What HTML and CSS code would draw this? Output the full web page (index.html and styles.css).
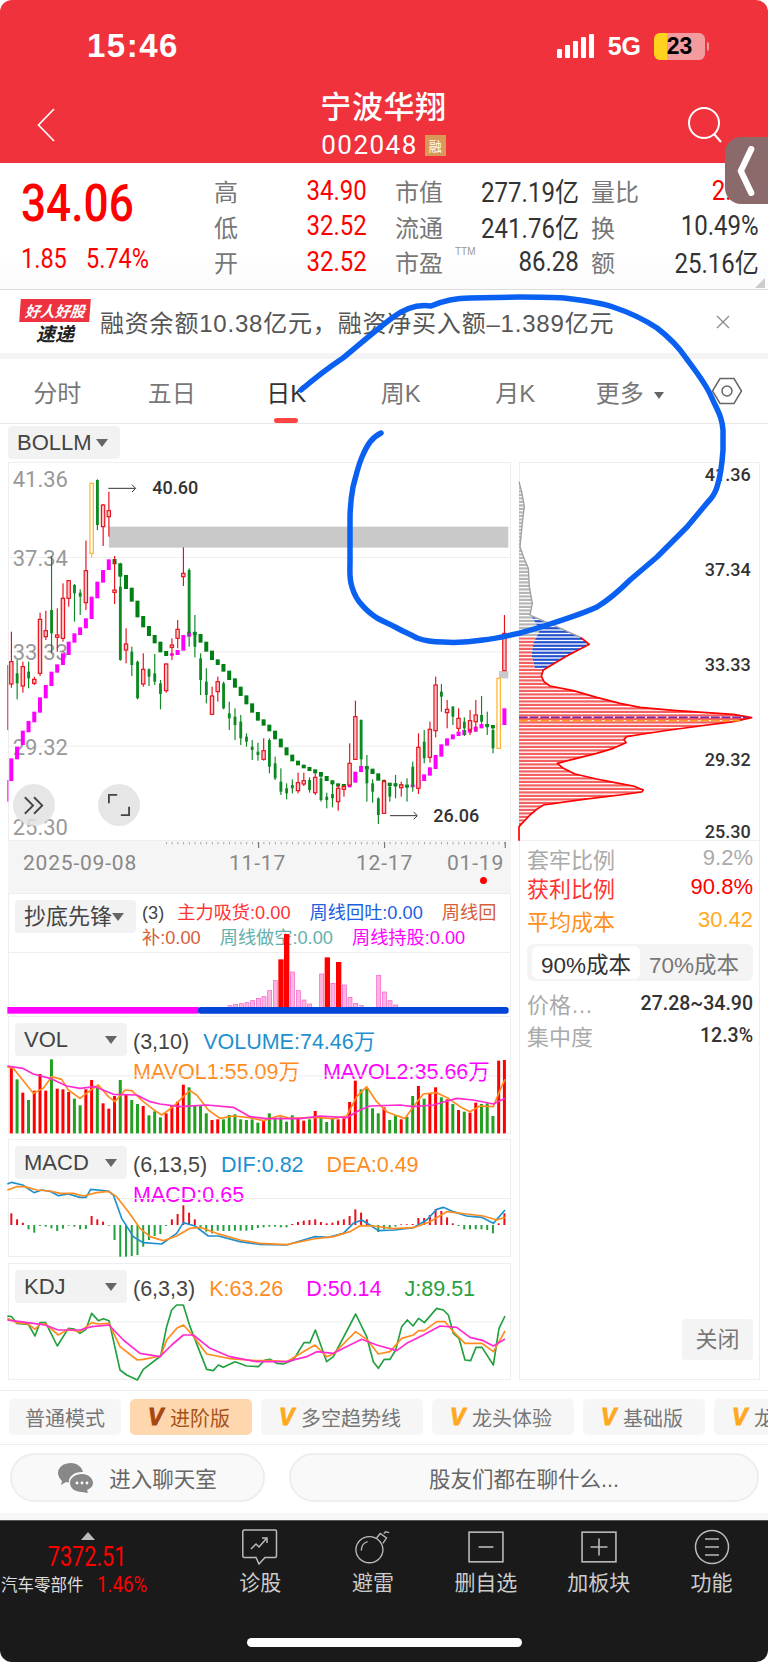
FILE: index.html
```html
<!DOCTYPE html>
<html lang="zh-CN">
<head>
    <meta charset="UTF-8">
    <meta name="viewport" content="width=device-width, initial-scale=1.0">
    <title>宁波华翔 002048</title>
    <link rel="stylesheet" href="styles.css">
</head>
<body>
<div class="screen">
    <header class="top">
        <div class="status-bar">
            <span class="time">15:46</span>
            <div class="status-right">
                <span class="signal"><i></i><i></i><i></i><i></i><i></i></span>
                <span class="net">5G</span>
                <span class="battery"><b>23</b></span>
                <span class="battery-nub"></span>
            </div>
        </div>
        <div class="title-bar">
            <svg class="back" viewBox="0 0 18 34"><path d="M17 1 1.5 17 17 33"/></svg>
            <div class="title-mid">
                <div class="stock-name">宁波华翔</div>
                <div class="stock-code">002048<span class="rong">融</span></div>
            </div>
            <svg class="search" viewBox="0 0 36 36"><circle cx="17" cy="16" r="15"/><path d="M27 27l7 8"/></svg>
        </div>
    </header>
    <div class="side-tab"><svg viewBox="0 0 20 48"><path d="M15 3 5 24l10 21"/></svg></div>

    <section class="quote">
        <div class="price-box">
            <div class="price">34.06</div>
            <div class="change"><span>1.85</span><span>5.74%</span></div>
        </div>
        <div class="quote-grid">
            <div class="q q1"><span class="q-l">高</span><span class="q-v up">34.90</span></div>
            <div class="q q2"><span class="q-l">市值</span><span class="q-v">277.19亿</span></div>
            <div class="q q3"><span class="q-l">量比</span><span class="q-v up">2.08</span></div>
            <div class="q q1"><span class="q-l">低</span><span class="q-v up">32.52</span></div>
            <div class="q q2"><span class="q-l">流通</span><span class="q-v">241.76亿</span></div>
            <div class="q q3"><span class="q-l">换</span><span class="q-v">10.49%</span></div>
            <div class="q q1"><span class="q-l">开</span><span class="q-v up">32.52</span></div>
            <div class="q q2"><span class="q-l">市盈<sup class="ttm">TTM</sup></span><span class="q-v">86.28</span></div>
            <div class="q q3"><span class="q-l">额</span><span class="q-v">25.16亿</span></div>
        </div>
        <span class="corner"></span>
    </section>

    <section class="news">
        <div class="news-logo">
            <div class="news-flag">好人好股</div>
            <div class="news-sub">速递</div>
        </div>
        <div class="news-text">融资余额10.38亿元，融资净买入额–1.389亿元</div>
        <svg class="news-close" viewBox="0 0 14 14"><path d="M1 1l12 12M13 1 1 13"/></svg>
    </section>

    <nav class="tabs">
        <span class="tab">分时</span>
        <span class="tab">五日</span>
        <span class="tab active">日K</span>
        <span class="tab">周K</span>
        <span class="tab">月K</span>
        <span class="tab">更多<i class="tab-caret"></i></span>
        <svg class="tab-set" viewBox="0 0 32 28"><path d="M9 1.5h14L30.5 14 23 26.5H9L1.500 14z"/><circle cx="16" cy="14" r="5"/></svg>
    </nav>

    <div class="charts">
        <div class="left-col">
            <div class="pick pick-boll">BOLLM<i class="caret"></i></div>
            <div class="main-frame">
                <svg id="kline" class="chart-svg" viewBox="24 126 1509 1137"></svg>
                <span class="round-btn btn-more">
                    <svg viewBox="0 0 24 20"><path d="M2 1l9 9-9 9M12 1l9 9-9 9"/></svg>
                </span>
                <span class="round-btn btn-full">
                    <svg viewBox="0 0 24 24"><path d="M1 10V1h9M23 14v9h-9"/></svg>
                </span>
            </div>
            <div class="dates">
                <span>2025-09-08</span><span>11-17</span><span>12-17</span><span>01-19</span>
                <i class="dot"></i>
            </div>

            <div class="panel panel-cd">
                <div class="panel-head">
                    <div class="pick pick-cd">抄底先锋<i class="caret"></i></div>
                    <div class="legend legend-cd">
                        <span class="param">(3)</span>
                        <span class="c-red">主力吸货:0.00</span>
                        <span class="c-blue">周线回吐:0.00</span>
                        <span class="c-brick">周线回补:0.00</span>
                        <span class="c-teal">周线做空:0.00</span>
                        <span class="c-pink">周线持股:0.00</span>
                    </div>
                </div>
                <svg id="cd" class="panel-svg" viewBox="24 129 1509 363"></svg>
            </div>

            <div class="panel panel-vol">
                <div class="panel-head">
                    <div class="pick pick-sub">VOL<i class="caret"></i></div>
                    <div class="legend">
                        <span class="param">(3,10)</span>
                        <span class="c-sky">VOLUME:74.46万</span>
                        <span class="c-orange">MAVOL1:55.09万</span>
                        <span class="c-pink">MAVOL2:35.66万</span>
                    </div>
                </div>
                <svg id="vol" class="panel-svg" viewBox="24 498 1509 354"></svg>
            </div>

            <div class="panel panel-macd">
                <div class="panel-head">
                    <div class="pick pick-sub">MACD<i class="caret"></i></div>
                    <div class="legend">
                        <span class="param">(6,13,5)</span>
                        <span class="c-sky">DIF:0.82</span>
                        <span class="c-orange">DEA:0.49</span>
                        <span class="c-pink">MACD:0.65</span>
                    </div>
                </div>
                <svg id="macd" class="panel-svg" viewBox="24 27 1509 354"></svg>
            </div>

            <div class="panel panel-kdj">
                <div class="panel-head">
                    <div class="pick pick-sub">KDJ<i class="caret"></i></div>
                    <div class="legend">
                        <span class="param">(6,3,3)</span>
                        <span class="c-orange">K:63.26</span>
                        <span class="c-pink">D:50.14</span>
                        <span class="c-green">J:89.51</span>
                    </div>
                </div>
                <svg id="kdj" class="panel-svg" viewBox="24 399 1509 351"></svg>
            </div>
        </div>

        <aside class="right-col">
            <svg id="chips" class="chips-svg" viewBox="57 126 723 1137"></svg>
            <div class="stats">
                <div class="stat stat-grey"><span>套牢比例</span><span>9.2%</span></div>
                <div class="stat stat-red"><span>获利比例</span><span>90.8%</span></div>
                <div class="stat stat-orange"><span>平均成本</span><span>30.42</span></div>
                <div class="seg"><span class="seg-on">90%成本</span><span>70%成本</span></div>
                <div class="stat stat-info"><span>价格…</span><b>27.28~34.90</b></div>
                <div class="stat stat-info"><span>集中度</span><b>12.3%</b></div>
                <div class="close-btn">关闭</div>
            </div>
        </aside>
    </div>

    <div class="modes">
        <span class="mode">普通模式</span>
        <span class="mode mode-on"><i>V</i>进阶版</span>
        <span class="mode"><i>V</i>多空趋势线</span>
        <span class="mode"><i>V</i>龙头体验</span>
        <span class="mode"><i>V</i>基础版</span>
        <span class="mode"><i>V</i>龙头</span>
    </div>

    <div class="chat">
        <div class="pill pill-room">
            <svg class="chat-ico" viewBox="0 0 36 30">
                <path d="M13 0C6 0 0 4 0 10c0 3 2 6 4 8l-1 4 5-3c1 .3 2 .4 3 .5C10 14 16 9 24 9h1C24 4 19 0 13 0z"/>
                <path d="M24 11c-7 0-12 4-12 9s5 9 12 9l6 1 -1-3c4-2 6-4 6-7 0-5-5-9-11-9z"/>
                <circle cx="19" cy="20" r="1.400" fill="#fff"/><circle cx="24" cy="20" r="1.400" fill="#fff"/><circle cx="29" cy="20" r="1.400" fill="#fff"/>
            </svg>
            <span>进入聊天室</span>
        </div>
        <div class="pill pill-talk">股友们都在聊什么...</div>
    </div>
    <div class="chat-gap"></div>

    <footer class="bottom">
        <div class="bottom-row">
            <div class="market">
                <i class="market-up"></i>
                <div class="market-val">7372.51</div>
                <div class="market-line"><span>汽车零部件</span><em>1.46%</em></div>
            </div>
            <div class="act">
                <svg viewBox="0 0 36 36"><path d="M2 1h31a1.500 1.500 0 0 1 1.500 1.500V27a1.500 1.500 0 0 1-1.500 1.500H23L17 35l-3-6.500H2A1.500 1.500 0 0 1 .8 27V2.500A1.500 1.500 0 0 1 2 1z"/><path d="M9 20l5-5 3 3 7-8M20 9h5v5"/></svg>
                <span>诊股</span>
            </div>
            <div class="act">
                <svg viewBox="0 0 40 36"><ellipse cx="16" cy="21" rx="15" ry="14.500"/><path d="M7 22c0-5 3-9 7-10"/><path d="M24 8l4-5 7 5-4 6"/><path d="M32 3l2-2 4 1"/></svg>
                <span>避雷</span>
            </div>
            <div class="act">
                <svg viewBox="0 0 34 30"><rect x="1" y="1" width="32" height="28"/><path d="M10 15h14"/></svg>
                <span>删自选</span>
            </div>
            <div class="act">
                <svg viewBox="0 0 34 30"><rect x="1" y="1" width="32" height="28"/><path d="M9 15h16M17 7v16"/></svg>
                <span>加板块</span>
            </div>
            <div class="act">
                <svg viewBox="0 0 36 36"><circle cx="18" cy="18" r="16.500"/><path d="M11 10h14M11 18h14M11 26h14"/></svg>
                <span>功能</span>
            </div>
        </div>
        <div class="home-bar"></div>
    </footer>

    <svg class="scribble" viewBox="0 0 768 1662">
        <path d="M301 390C315 378 328 368 343 358 360 344 376 330 392 318 405 308 418 304 431 306 445 300 458 298 470 298L520 297C535 297 550 297 564 298 582 300 598 302 613 307 628 312 642 318 657 328 670 338 678 346 686 358 698 374 706 384 711 396 717 410 722 416 723 430L723 450C722 465 720 478 717 487 715 494 711 499 707 503L687 527 657 557 630 580C620 590 610 599 597 607 582 614 568 618 553 623 542 627 531 630 520 633 507 636 495 639 483 640 470 642 456 643 443 642 434 642 425 641 417 638 410 634 404 632 397 628 390 624 384 622 377 618 371 614 366 610 362 605 357 600 354 594 352 587 349 578 350 570 350 563L350 520C350 508 351 498 353 487 356 476 358 466 362 457 365 450 367 446 370 442 373 438 377 435 381 433"/>
    </svg>
</div>
<script src="charts.js"></script>
</body>
</html>
```

FILE: styles.css
```css
* { box-sizing: border-box; }
html, body { margin: 0; padding: 0; background: #fff; }
body { font-family: "Liberation Sans", "Noto Sans CJK SC", sans-serif; color: #333; }
.screen { position: relative; width: 768px; height: 1662px; overflow: hidden; background: #fff; }
i, em { font-style: normal; }

/* 数字字体 */
.price, .change, .q-v, .market-val, .market-line em, .stock-code, .news-text, .dates { font-family: "Roboto", "Noto Sans CJK SC", sans-serif; }

/* 顶部 */
.top { background: #EF323C; height: 163px; border-radius: 12px 12px 0 0; color: #fff; }
.status-bar { height: 86px; padding: 6px 59px 0 87px; display: flex; align-items: center; }
.time { font-weight: 700; font-size: 33px; letter-spacing: 1.500px; }
.status-right { margin-left: auto; display: flex; align-items: center; }
.signal { display: flex; align-items: flex-end; gap: 3px; height: 24px; margin-right: 14px; }
.signal i { width: 5px; background: #fff; border-radius: 1px; }
.signal i:nth-child(1) { height: 9px; }
.signal i:nth-child(2) { height: 13px; }
.signal i:nth-child(3) { height: 17px; }
.signal i:nth-child(4) { height: 21px; }
.signal i:nth-child(5) { height: 24px; }
.net { font-size: 25px; font-weight: 700; margin-right: 13px; }
.battery { width: 51px; height: 27px; border-radius: 6px; background: linear-gradient(90deg, #FFD21E 0 13px, #F29CA0 13px); color: #000; text-align: center; font-size: 23px; line-height: 27px; }
.battery-nub { width: 2px; height: 9px; margin-left: 2px; background: #F29CA0; border-radius: 0 2px 2px 0; }
.title-bar { height: 77px; padding: 0 45px 0 37px; display: flex; align-items: center; justify-content: space-between; }
.back { width: 18px; height: 34px; fill: none; stroke: #fff; stroke-width: 1.700; }
.search { width: 36px; height: 36px; fill: none; stroke: #fff; stroke-width: 2; }
.title-mid { text-align: center; margin-left: 25px; }
.stock-name { font-size: 31px; line-height: 42px; letter-spacing: .6px; font-weight: 500; }
.stock-code { font-size: 26px; line-height: 33px; display: flex; align-items: center; justify-content: center; letter-spacing: 1.500px; }
.rong { width: 21px; height: 21px; margin-left: 7px; background: #D89A56; font: 13px/21px "Noto Sans CJK SC", sans-serif; letter-spacing: 0; }
.side-tab { position: absolute; left: 725px; top: 137px; width: 43px; height: 67px; border-radius: 16px 0 0 16px; background: #8B6A6B; display: flex; align-items: center; padding-left: 10px; z-index: 5; }
.side-tab svg { width: 22px; height: 50px; fill: none; stroke: #fff; stroke-width: 6; stroke-linecap: round; stroke-linejoin: round; }

/* 报价 */
.quote { position: relative; height: 127px; display: flex; border-bottom: 1px solid #ddd; background: linear-gradient(180deg, #fff, #fff 70%, #fbfbfb); }
.price-box { width: 214px; padding: 10px 0 0 21px; }
.price { display: inline-block; color: #F00; font-size: 52px; line-height: 61px; font-weight: 500; transform: scaleX(.85); transform-origin: left center; }
.change { margin-top: 7px; color: #F00; font-size: 27px; line-height: 36px; display: flex; gap: 12px; }
.change span { display: inline-block; transform: scaleX(.87); transform-origin: left center; }
.quote-grid { padding-top: 10px; display: grid; grid-template-columns: 181px 196px 168px; grid-auto-rows: 35.500px; }
.q { display: flex; justify-content: space-between; align-items: center; }
.q1 { padding-right: 28px; }
.q2 { padding-right: 12px; }
.q-l { font-size: 24px; color: #777; position: relative; }
.q-v { display: inline-block; font-size: 27px; color: #333; white-space: nowrap; transform: scaleX(.89); transform-origin: right center; }
.q-v.up { color: #F00; }
.ttm { position: absolute; left: 60px; top: 2px; font: 10px "Liberation Sans", sans-serif; color: #999; }
.corner { position: absolute; right: 3px; bottom: 1px; border: 5px solid transparent; border-right-color: #ccc; border-bottom-color: #ccc; }

/* 资讯 */
.news { height: 69px; display: flex; align-items: center; padding: 0 38px 0 20px; border-bottom: 6px solid #F4F4F4; }
.news-logo { width: 70px; margin-right: 10px; text-align: center; }
.news-flag { background: #EE3340; color: #fff; font: italic 700 15px/23px "Noto Sans CJK SC", sans-serif; transform: skewX(-4deg); white-space: nowrap; }
.news-sub { font: italic 700 19px/22px "Noto Sans CJK SC", sans-serif; color: #222; }
.news-text { font-size: 24px; color: #555; flex: 1; white-space: nowrap; letter-spacing: .8px; font-family: "Liberation Sans", "Noto Sans CJK SC", sans-serif; }
.news-close { width: 14px; height: 14px; fill: none; stroke: #888; stroke-width: 1.200; }

/* 周期切换 */
.tabs { height: 65px; display: flex; align-items: center; border-bottom: 1px solid #e8e8e8; position: relative; }
.tab { width: 114.500px; text-align: center; font-size: 24px; color: #777; position: relative; }
.tab.active { color: #333; }
.tab.active::after { content: ""; position: absolute; left: 45px; width: 24px; top: 44px; height: 5px; background: #F44; border-radius: 3px; }
.tab-caret { display: inline-block; margin-left: 10px; vertical-align: 3px; border: 5.500px solid transparent; border-top: 7px solid #666; border-bottom: 0; }
.tab-set { width: 32px; height: 28px; margin-left: 24px; fill: none; stroke: #666; stroke-width: 1.500; }

/* 图表区 */
.charts { height: 967px; padding: 2px 8px 0; display: flex; gap: 8px; border-bottom: 1px solid #eee; }
.left-col { width: 503px; display: flex; flex-direction: column; }
.right-col { width: 241px; height: 918px; margin-top: 36px; border: 1px solid #eee; display: flex; flex-direction: column; }
.pick { background: #F2F2F2; border-radius: 4px; height: 33px; font-size: 22px; line-height: 33px; color: #444; position: relative; flex-shrink: 0; }
.pick-boll { width: 112px; padding-left: 9px; margin-bottom: 3px; }
.caret { position: absolute; top: 13px; border: 6.500px solid transparent; border-top: 8px solid #666; border-bottom: 0; }
.pick-boll .caret { left: 88px; }
.pick-cd { width: 121px; padding-left: 9px; }
.pick-cd .caret { left: 97px; }
.pick-sub { width: 112px; padding-left: 9px; }
.pick-sub .caret { left: 90px; }

.main-frame { position: relative; z-index: 1; height: 379px; border: 1px solid #eee; }
.chart-svg { position: absolute; left: -1px; top: -1px; width: 503px; height: 379px; overflow: visible; }
.axis-l { font: 66px "Roboto", sans-serif; fill: #999; }
.axis-ann { font: 500 54px "Roboto", sans-serif; fill: #333; }
.axis-r { font: 500 54px "Roboto", sans-serif; fill: #333; text-anchor: end; }
.round-btn { position: absolute; top: 321px; width: 42px; height: 42px; border-radius: 50%; background: rgba(226, 226, 226, .85); display: flex; align-items: center; justify-content: center; }
.btn-more { left: 4px; }
.btn-full { left: 89px; }
.btn-more svg { width: 22px; height: 19px; }
.btn-full svg { width: 22px; height: 22px; }
.round-btn svg { fill: none; stroke: #444; stroke-width: 2; }
.dates { position: relative; height: 52px; background: #F5F5F5; padding-left: 15px; padding-top: 9px; display: grid; grid-template-columns: 206px 127px 91px auto; font-size: 21px; line-height: 26px; color: #888; letter-spacing: .8px; }
.dot { position: absolute; left: 472px; top: 36px; width: 7px; height: 7px; border-radius: 50%; background: #F00; }

.panel { position: relative; border: 1px solid #eee; padding: 6px 0 0 6px; }
.panel-cd { height: 121px; border-bottom: 0; }
.panel-vol { height: 118px; margin-top: 2px; }
.panel-macd { height: 118px; margin-top: 5px; }
.panel-kdj { height: 117px; margin-top: 6px; }
.panel-head { display: flex; }
.panel-svg { position: absolute; left: -1px; top: -1px; width: 503px; overflow: visible; pointer-events: none; }
.panel-cd .panel-svg { height: 121px; }
.panel-vol .panel-svg, .panel-macd .panel-svg { height: 118px; }
.panel-kdj .panel-svg { height: 117px; }
.legend { flex: 1; padding: 4px 0 0 6px; margin-right: -24px; font-size: 21.500px; line-height: 30px; }
.legend span { margin-right: 17px; }
.legend .param { margin-right: 8px; }
.legend-cd { font-size: 18.200px; line-height: 25px; padding-left: 6px; padding-top: 1px; margin-right: 0; }
.legend-cd span { margin-right: 14px; }
.legend-cd .param { margin-right: 8px; }
.param { color: #444; }
.c-red { color: #F33; }
.c-blue { color: #2060E0; }
.c-brick { color: #D4603A; }
.c-teal { color: #64AFAC; }
.c-pink { color: #F0F; }
.c-sky { color: #1E90D0; }
.c-orange { color: #FF8C1E; }
.c-green { color: #2AA040; }

/* 筹码 */
.chips-svg { display: block; margin: -1px; width: 241px; height: 379px; flex-shrink: 0; overflow: visible; }
.stats { flex: 1; border-top: 1px solid #eee; padding: 3px 6px 19px 7px; display: flex; flex-direction: column; }
.stat { display: flex; justify-content: space-between; align-items: center; font-size: 22px; }
.stat-grey { height: 28px; color: #AAA; }
.stat-red { height: 30px; color: #F33; }
.stat-red span:last-child { color: #F00; }
.stat-orange { height: 35px; color: #FF9020; }
.stat-orange span:last-child { color: #FFAA20; }
.seg { margin-top: 7px; height: 37px; background: #F4F4F4; border-radius: 6px; padding: 1px 5px; display: flex; font-size: 22.500px; color: #777; align-items: stretch; }
.seg span { flex: 1; display: flex; align-items: center; justify-content: center; white-space: nowrap; }
.seg .seg-on { flex: 0 0 108px; margin: 1px 0; background: #fff; border-radius: 6px; color: #333; }
.stat-info { height: 32px; color: #AAA; }
.stat-info:nth-child(5) { margin-top: 6px; }
.stat-info b { font: 500 19.500px "Roboto", sans-serif; color: #333; }
.close-btn { margin: auto 0 0 auto; width: 71px; height: 41px; background: #F4F4F4; border-radius: 4px; text-align: center; font-size: 22px; line-height: 41px; color: #777; }

/* 模式 */
.modes { height: 54px; padding: 8px 0 0 9px; display: flex; gap: 9px; overflow: hidden; border-bottom: 1px solid #eee; }
.mode { flex-shrink: 0; height: 36px; padding: 0 16px; background: #F6F6F6; border-radius: 5px; display: flex; align-items: center; font-size: 20px; color: #777; white-space: nowrap; }
.mode:nth-child(n+2) { padding: 0 22px 0 18px; }
.mode i { width: 16px; font: italic 900 23px "Liberation Sans", sans-serif; color: #FFA820; margin-right: 6px; -webkit-text-stroke: 1px currentColor; }
.mode-on { background: #FFD7AE; color: #A5521A; }
.mode-on i { color: #A8480E; }

/* 聊天 */
.chat { height: 68px; padding: 8px 9px 0 10px; display: flex; gap: 24px; }
.pill { height: 49px; border-radius: 25px; background: #F9F9F9; border: 2px solid #EEE; display: flex; align-items: center; justify-content: center; font-size: 21.500px; color: #666; }
.pill-room { width: 255px; }
.pill-talk { flex: 1; }
.chat-ico { width: 36px; height: 30px; margin-right: 15px; fill: #888; }
.chat-gap { height: 8px; background: #F7F7F7; border-bottom: 1px solid #555; }

/* 底部 */
.bottom { height: 141px; background: #1A1A1A; border-radius: 0 0 12px 12px; position: relative; color: #CCC; }
.bottom-row { display: flex; }
.market { width: 204px; padding-top: 10px; text-align: center; position: relative; }
.market-up { position: absolute; left: 81px; top: 11px; border: 7.500px solid transparent; border-bottom: 8px solid #BBB; border-top: 0; }
.market-val { display: inline-block; margin: 11px 0 0 -30px; font-size: 27px; line-height: 30px; color: #F00; transform: scaleX(.8); }
.market-line { display: flex; padding-left: 1px; margin-top: -3px; align-items: center; height: 30px; white-space: nowrap; font-size: 16.500px; color: #ddd; }
.market-line em { font-size: 22px; color: #F00; margin-left: 13px; transform: scaleX(.85); transform-origin: left center; }
.act { width: 113px; padding-top: 8px; display: flex; flex-direction: column; align-items: center; font-size: 21px; }
.act svg { width: 36px; height: 36px; fill: none; stroke: #BBB; stroke-width: 1.500; margin-bottom: 1px; }
.home-bar { position: absolute; left: 247px; top: 117px; width: 275px; height: 9px; border-radius: 5px; background: #fff; }

/* 手写蓝线 */
.scribble { position: absolute; left: 0; top: 0; width: 768px; height: 1662px; z-index: 4; pointer-events: none; fill: none; stroke: #0A60F0; stroke-width: 5.500; stroke-linecap: round; stroke-linejoin: round; }
```

FILE: charts.js
```js
// K线、成交量等图表，坐标按 3 倍图记录
const STEP = 17.2;
const RED = '#E8101C', GREEN = '#0E8A24', ORANGE = '#FFB020', PINK = '#F0F';
const xAt = i => 34 + STEP * i;

// [颜色, 上影, 实体上, 实体下, 下影]
const candles = [
    'r635,725,792,803', 'g720,760,790,838', 'r725,740,798,818', 'g725,755,775,805', 'r770,778,790,795',
    'r578,598,760,768', 'r572,632,650,660', 'g408,570,640,700', 'r565,645,652,695', 'r490,535,655,665',
    'r480,482,535,560', 'g492,495,520,605', 'g508,518,530,585', 'r362,452,548,570', 'o190,190,400,412',
    'g178,180,315,330', 'r252,255,320,378', 'r215,272,290,350', 'r408,510,517,552', 'g428,500,720,722',
    'r625,672,690,730', 'g680,695,735,768', 'g722,725,835,838', 'r700,748,792,800', 'g745,748,770,798',
    'g702,760,785,795', 'g780,790,822,868', 'r730,732,812,818', 'r655,675,682,720', 'r600,628,655,685',
    'r382,460,470,498', 'g445,450,640,680', 'g585,635,680,712', 'g700,715,780,825', 'g745,785,825,850',
    'r800,828,883,885', 'r770,785,815,845', 'g785,790,865,868', 'g845,880,895,930', 'g865,890,915,960',
    'g885,905,955,975', 'g940,950,965,980', 'g960,980,990,1020', 'g968,995,1005,1022', 'r955,992,1018,1022',
    'g955,960,1040,1060', 'g1010,1030,1075,1080', 'g1045,1085,1115,1125', 'g1090,1105,1120,1138', 'g1078,1095,1105,1120',
    'r1058,1088,1112,1120', 'r1058,1082,1092,1098', 'g1072,1080,1110,1118', 'r1060,1072,1118,1125', 'g1065,1075,1140,1145',
    'g1118,1130,1140,1165', 'g1080,1122,1135,1162', 'r1095,1105,1145,1172', 'r1095,1100,1108,1130', 'r970,1030,1095,1100',
    'r842,890,1018,1020', 'g898,900,1018,1040', 'g1005,1040,1090,1145', 'g1078,1090,1115,1148', 'g1132,1135,1185,1212',
    'r1078,1085,1180,1182', 'g1090,1100,1130,1145', 'g1065,1090,1100,1135', 'r1085,1095,1103,1130', 'g1075,1095,1103,1145',
    'g1025,1040,1095,1115', 'r940,982,1105,1122', 'g930,965,1015,1030', 'r905,928,1012,1028', 'r770,795,932,952',
    'g792,815,830,875', 'r840,868,878,925', 'g858,860,890,915', 'r865,895,925,935', 'g892,905,925,948',
    'r870,902,928,945', 'r840,885,905,935', 'g828,885,905,912', 'g875,912,922,945', 'g915,930,985,1000',
    'o775,775,985,985', 'r585,640,752,752'
];

// 均线色块：[上, 下, 颜色]，按 K 线序号排
const bollM = [
    [1015,1083,'m'],[980,1018,'m'],[932,975,'m'],[903,937,'m'],[875,907,'m'],[832,878,'m'],[795,835,'m'],[755,798,'m'],
    [733,758,'m'],[700,735,'m'],[665,705,'m'],[640,668,'m'],[622,645,'m'],[595,625,'m'],[530,597,'m'],[485,535,'m'],
    [450,488,'m'],[418,450,'m'],[417,433,'g'],[430,470,'g'],[465,507,'g'],[503,545,'g'],[542,592,'g'],[588,622,'g'],
    [618,648,'g'],[645,670,'g'],[665,697,'g'],[693,708,'g'],[700,707,'m'],[690,705,'m'],[645,692,'m'],[635,650,'m'],
    [636,645,'g'],[642,668,'g'],[665,695,'g'],[692,720,'g'],[718,735,'g'],[732,755,'g'],[752,780,'g'],[775,803,'g'],
    [800,828,'g'],[826,853,'g'],[850,878,'g'],[876,902,'g'],[898,917,'g'],[914,934,'g'],[932,958,'g'],[956,982,'g'],
    [982,1006,'g'],[1004,1024,'g'],[1022,1036,'g'],[1034,1045,'g'],[1041,1053,'g'],[1048,1060,'g'],[1056,1070,'g'],[1068,1083,'g'],
    [1081,1093,'g'],[1090,1100,'g'],[1092,1102,'g'],[1085,1102,'m'],[1055,1088,'m'],[1038,1056,'m'],[1038,1048,'g'],[1046,1062,'g'],
    [1060,1082,'g'],[1080,1090,'g'],[1088,1098,'g'],[1090,1098,'g'],[1093,1103,'g'],[1094,1102,'g'],[1094,1102,'m'],[1080,1100,'m'],
    [1063,1083,'m'],[1042,1067,'m'],[1005,1047,'m'],[973,1010,'m'],[955,977,'m'],[943,958,'m'],[935,948,'m'],[930,945,'m'],
    [928,938,'m'],[920,935,'m'],[912,925,'m'],[912,920,'g'],[915,925,'g'],[910,928,'m'],[865,915,'m']
];

function rect(x, y, w, h, fill, extra) {
    return `<rect x="${x}" y="${y}" width="${w}" height="${h}" fill="${fill}" ${extra || ''}/>`;
}

function line(pts, color, w) {
    return `<polyline points="${pts}" fill="none" stroke="${color}" stroke-width="${w}" stroke-linejoin="round"/>`;
}

function drawKline() {
    let s = '';
    [412, 695, 978].forEach(y => { s += rect(24, y - 1, 1509, 3, '#eee'); });
    s += rect(327, 320, 1198, 63, '#C9C9C9') + rect(1497, 753, 28, 22, '#C9C9C9');
    [[178, '41.36'], [415, '37.34'], [697, '33.33'], [980, '29.32'], [1220, '25.30']].forEach(a => {
        s += `<text class="axis-l" x="38" y="${a[0] + 24}">${a[1]}</text>`;
    });
    s += rect(22, 735, 2.500, 195, RED) + rect(22, 1080, 3, 65, PINK);
    bollM.forEach((b, i) => {
        s += rect(xAt(i) - 6, b[0], 12, b[1] - b[0], b[2] === 'm' ? PINK : '#007F14');
    });
    candles.forEach((c, i) => {
        const t = c[0], v = c.slice(1).split(',').map(Number), x = xAt(i);
        const color = t === 'r' ? RED : t === 'g' ? GREEN : ORANGE;
        s += rect(x - 1.500, v[0], 3.500, v[3] - v[0], color);
        if (t === 'g') s += rect(x - 4, v[1], 8.500, v[2] - v[1], color);
        else s += rect(x - 5, v[1], 10, v[2] - v[1], t === 'r' ? '#F9C4C4' : '#fff', `stroke="${color}" stroke-width="3.500"`);
    });
    // 最高最低标注
    s += line('325,205 405,205', '#333', 3) + line('396,194 407,205 396,216', '#333', 3);
    s += `<text class="axis-ann" x="457" y="222">40.60</text>`;
    s += line('1170,1187 1250,1187', '#333', 3) + line('1241,1176 1252,1187 1241,1198', '#333', 3);
    s += `<text class="axis-ann" x="1300" y="1205">26.06</text>`;
    // 时间轴刻度
    for (let x = 498; x < 1520; x += 17.2) s += rect(x, 1266, 2.500, 7, '#999');
    [775, 1153, 1515].forEach(x => { s += rect(x - 1, 1266, 3.500, 18, '#777'); });
    document.getElementById('kline').innerHTML = s;
}

function drawCd() {
    const pinkBars = [[690,467],[707,463],[724,461],[741,458],[758,452],[775,445],[792,440],[809,422],[826,392],[877,366],[895,422],[912,450],[929,462],[965,372],[999,400],[1033,405],[1050,442],[1067,460],[1084,467],[1136,376],[1153,426],[1170,452],[1187,465]];
    const redBars = [[843,328],[860,252],[982,322],[1016,336]];
    let s = rect(24, 306, 1509, 3, '#eee');
    pinkBars.forEach(b => { s += rect(b[0] - 6, b[1], 12, 472 - b[1], '#FFB4E0', 'stroke="#F55ACB" stroke-width="2"'); });
    redBars.forEach(b => { s += rect(b[0] - 8, b[1], 16, 472 - b[1], '#F00'); });
    s += rect(22, 471, 574, 20, PINK) + rect(594, 471, 932, 20, '#0044D8', 'rx="8"');
    document.getElementById('cd').innerHTML = s;
}

function drawVol() {
    const bars = 'r650 g688 r728 g750 r722 r672 r722 g628 r716 r718 r726 g746 g766 r718 r690 g710 r760 r776 r738 g690 r735 g750 g762 r768 g796 g784 g802 r790 r768 r755 r704 g712 g765 g765 g790 r810 r808 g808 g795 g793 g808 g810 g808 g818 r810 g790 g802 g802 g815 g796 r805 r812 g808 r783 g800 g816 g806 r808 r805 r756 r692 g718 g714 g775 g790 r772 g810 g796 r808 g800 g738 r708 g746 r730 r712 g742 r748 g762 r780 g785 r788 r758 g762 g760 g798 r632 r630'.split(' ');
    let s = rect(24, 676, 1509, 3, '#eee');
    bars.forEach((b, i) => {
        const top = +b.slice(1);
        s += rect(xAt(i) - 4.500, top, 9, 850 - top, b[0] === 'r' ? '#F00' : '#23A020');
    });
    s += line('22,650 40,655 68,690 100,730 130,715 155,680 185,688 205,720 240,745 275,718 295,705 325,740 345,755 375,720 395,722 430,755 460,778 485,795 520,770 550,740 570,722 590,735 625,780 660,805 700,798 750,803 790,812 840,797 870,805 950,802 1000,806 1040,798 1070,740 1100,710 1130,755 1160,785 1190,797 1215,805 1240,770 1270,732 1310,728 1345,745 1380,770 1410,785 1440,768 1480,770 1500,720 1515,688', '#FF8C1E', 5);
    s += line('22,648 68,655 100,672 150,685 200,708 240,715 285,710 340,733 410,735 450,755 480,762 540,770 620,765 700,772 750,800 800,806 900,806 960,798 1040,803 1080,780 1110,768 1200,765 1240,770 1300,765 1370,745 1420,750 1480,762 1515,745', '#FF2BD0', 5);
    document.getElementById('vol').innerHTML = s;
}

function drawMacd() {
    const bars = 'r250 r268 r278 g298 g308 g288 g290 g295 g303 g296 g287 g290 g298 g297 r258 r268 r275 g287 g330 g380 g380 g378 g375 g350 g330 g318 g312 g288 r268 r252 r226 r248 r268 g295 g305 g310 g302 g303 g303 g302 g302 g302 g300 g294 g292 g290 g290 g292 g292 r282 r276 r272 r270 r268 r276 r280 r278 r272 r268 r258 r238 r248 r268 g290 g306 g298 g296 g290 r283 r283 r282 r264 r264 r255 r238 r243 r262 r280 g288 g298 g298 g298 g298 g300 g310 r280 r250'.split(' ');
    let s = rect(24, 204, 1509, 3, '#eee');
    bars.forEach((b, i) => {
        const v = +b.slice(1);
        s += rect(xAt(i) - 3, Math.min(v, 285), 6, Math.abs(v - 285), b[0] === 'r' ? '#E8101C' : '#23A040');
    });
    s += line('22,162 35,157 68,165 102,188 125,180 150,184 175,197 205,192 240,202 258,202 272,178 325,183 340,195 365,265 400,320 430,338 485,342 530,310 550,278 585,288 625,318 655,318 720,335 780,343 860,345 910,330 945,320 985,322 1030,310 1060,280 1085,270 1110,285 1135,302 1185,300 1240,293 1280,270 1310,238 1330,232 1360,245 1400,258 1445,262 1480,280 1515,240', '#1E90D0', 5);
    s += line('22,180 50,170 75,170 110,180 150,183 180,190 220,190 250,198 290,188 325,184 350,200 385,245 420,295 450,320 490,332 530,318 570,295 600,292 650,310 720,330 780,340 860,344 940,327 1000,320 1050,305 1080,287 1120,288 1180,296 1240,293 1290,275 1340,245 1400,252 1450,258 1490,270 1515,262', '#FF8C1E', 5);
    document.getElementById('macd').innerHTML = s;
}

function drawKdj() {
    let s = rect(24, 574, 1509, 3, '#eee');
    s += line('22,558 35,560 50,580 85,583 105,618 120,578 137,578 172,648 205,595 222,597 240,610 258,598 275,550 295,572 310,566 327,572 360,720 380,735 412,750 430,718 482,678 500,590 515,540 530,525 550,525 570,590 620,718 640,722 655,705 670,712 705,695 740,708 775,710 795,690 810,688 830,700 850,702 880,690 912,638 930,638 946,600 980,695 1000,680 1067,552 1100,620 1120,695 1135,715 1153,688 1170,688 1187,660 1205,590 1222,570 1239,588 1256,565 1273,578 1310,535 1330,540 1345,555 1360,610 1377,625 1395,690 1412,692 1428,652 1446,652 1480,705 1497,595 1515,558', '#23A040', 5);
    s += line('22,565 50,578 85,582 105,598 120,582 137,582 175,615 205,598 240,605 275,578 295,582 327,580 360,650 412,690 430,688 482,678 500,630 530,595 550,585 575,612 620,672 650,678 690,686 770,692 810,692 860,695 910,665 945,645 980,680 1000,672 1067,605 1100,628 1135,672 1170,665 1205,625 1240,615 1256,602 1273,602 1310,575 1335,575 1360,605 1395,640 1446,640 1480,665 1515,603', '#FF8C1E', 5);
    s += line('22,570 60,575 100,580 135,585 175,600 240,600 275,590 327,585 370,630 420,670 480,680 515,645 550,615 580,615 630,655 690,680 770,695 860,695 920,680 950,665 1000,670 1050,645 1085,628 1130,645 1190,662 1220,640 1270,615 1320,588 1370,592 1410,622 1450,632 1480,648 1515,627', '#FF2BD0', 5);
    document.getElementById('kdj').innerHTML = s;
}

function drawChips() {
    const greyEdge = '57,185 65,215 73,260 68,300 60,380 72,415 85,445 88,500 97,550 90,585 170,620 242,652';
    const redEdge = '242,652 268,673 200,708 130,750 124,768 132,785 150,798 220,812 290,832 360,850 420,862 520,871 620,878 700,883 755,893 700,905 600,918 510,930 430,942 380,950 372,958 378,968 340,985 290,1000 230,1015 172,1030 190,1045 225,1062 290,1077 345,1088 400,1098 430,1110 425,1116 360,1125 250,1138 130,1155 110,1168 90,1185 57,1220 57,1262';
    const blue = '95,590 170,620 242,652 268,673 130,750 105,745 95,705 100,670 120,630';
    const stripes = (color, y0, y1) => {
        let s = '';
        for (let y = y0; y < y1; y += 10.500) s += rect(57, y, 700, 6.500, color);
        return s;
    };
    let s = `<defs>
        <clipPath id="clipGrey"><polygon points="57,185 ${greyEdge} 57,652"/></clipPath>
        <clipPath id="clipRed"><polygon points="57,652 ${redEdge}"/></clipPath>
        <clipPath id="clipBlue"><polygon points="${blue}"/></clipPath>
    </defs>`;
    s += `<g clip-path="url(#clipGrey)">${stripes('#B5B5B5', 190, 660)}</g>`;
    s += `<g clip-path="url(#clipRed)">${stripes('#F46060', 652, 1262)}</g>`;
    s += `<g clip-path="url(#clipBlue)">${rect(57, 590, 300, 170, '#fff')}${stripes('#1F4FCC', 590, 760)}</g>`;
    s += line(greyEdge, '#A0A0A0', 4) + line(redEdge, '#F00', 5);
    s += `<line x1="57" x2="740" y1="892" y2="892" stroke="#7A2BA8" stroke-width="5" stroke-dasharray="26 6"/>`;
    s += `<line x1="57" x2="720" y1="902" y2="902" stroke="#FF9A20" stroke-width="5" stroke-dasharray="26 6"/>`;
    [[184, '41.36'], [468, '37.34'], [753, '33.33'], [1039, '29.32'], [1253, '25.30']].forEach(a => {
        s += `<text class="axis-r" x="752" y="${a[0]}">${a[1]}</text>`;
    });
    document.getElementById('chips').innerHTML = s;
}

drawKline();
drawCd();
drawVol();
drawMacd();
drawKdj();
drawChips();
```
